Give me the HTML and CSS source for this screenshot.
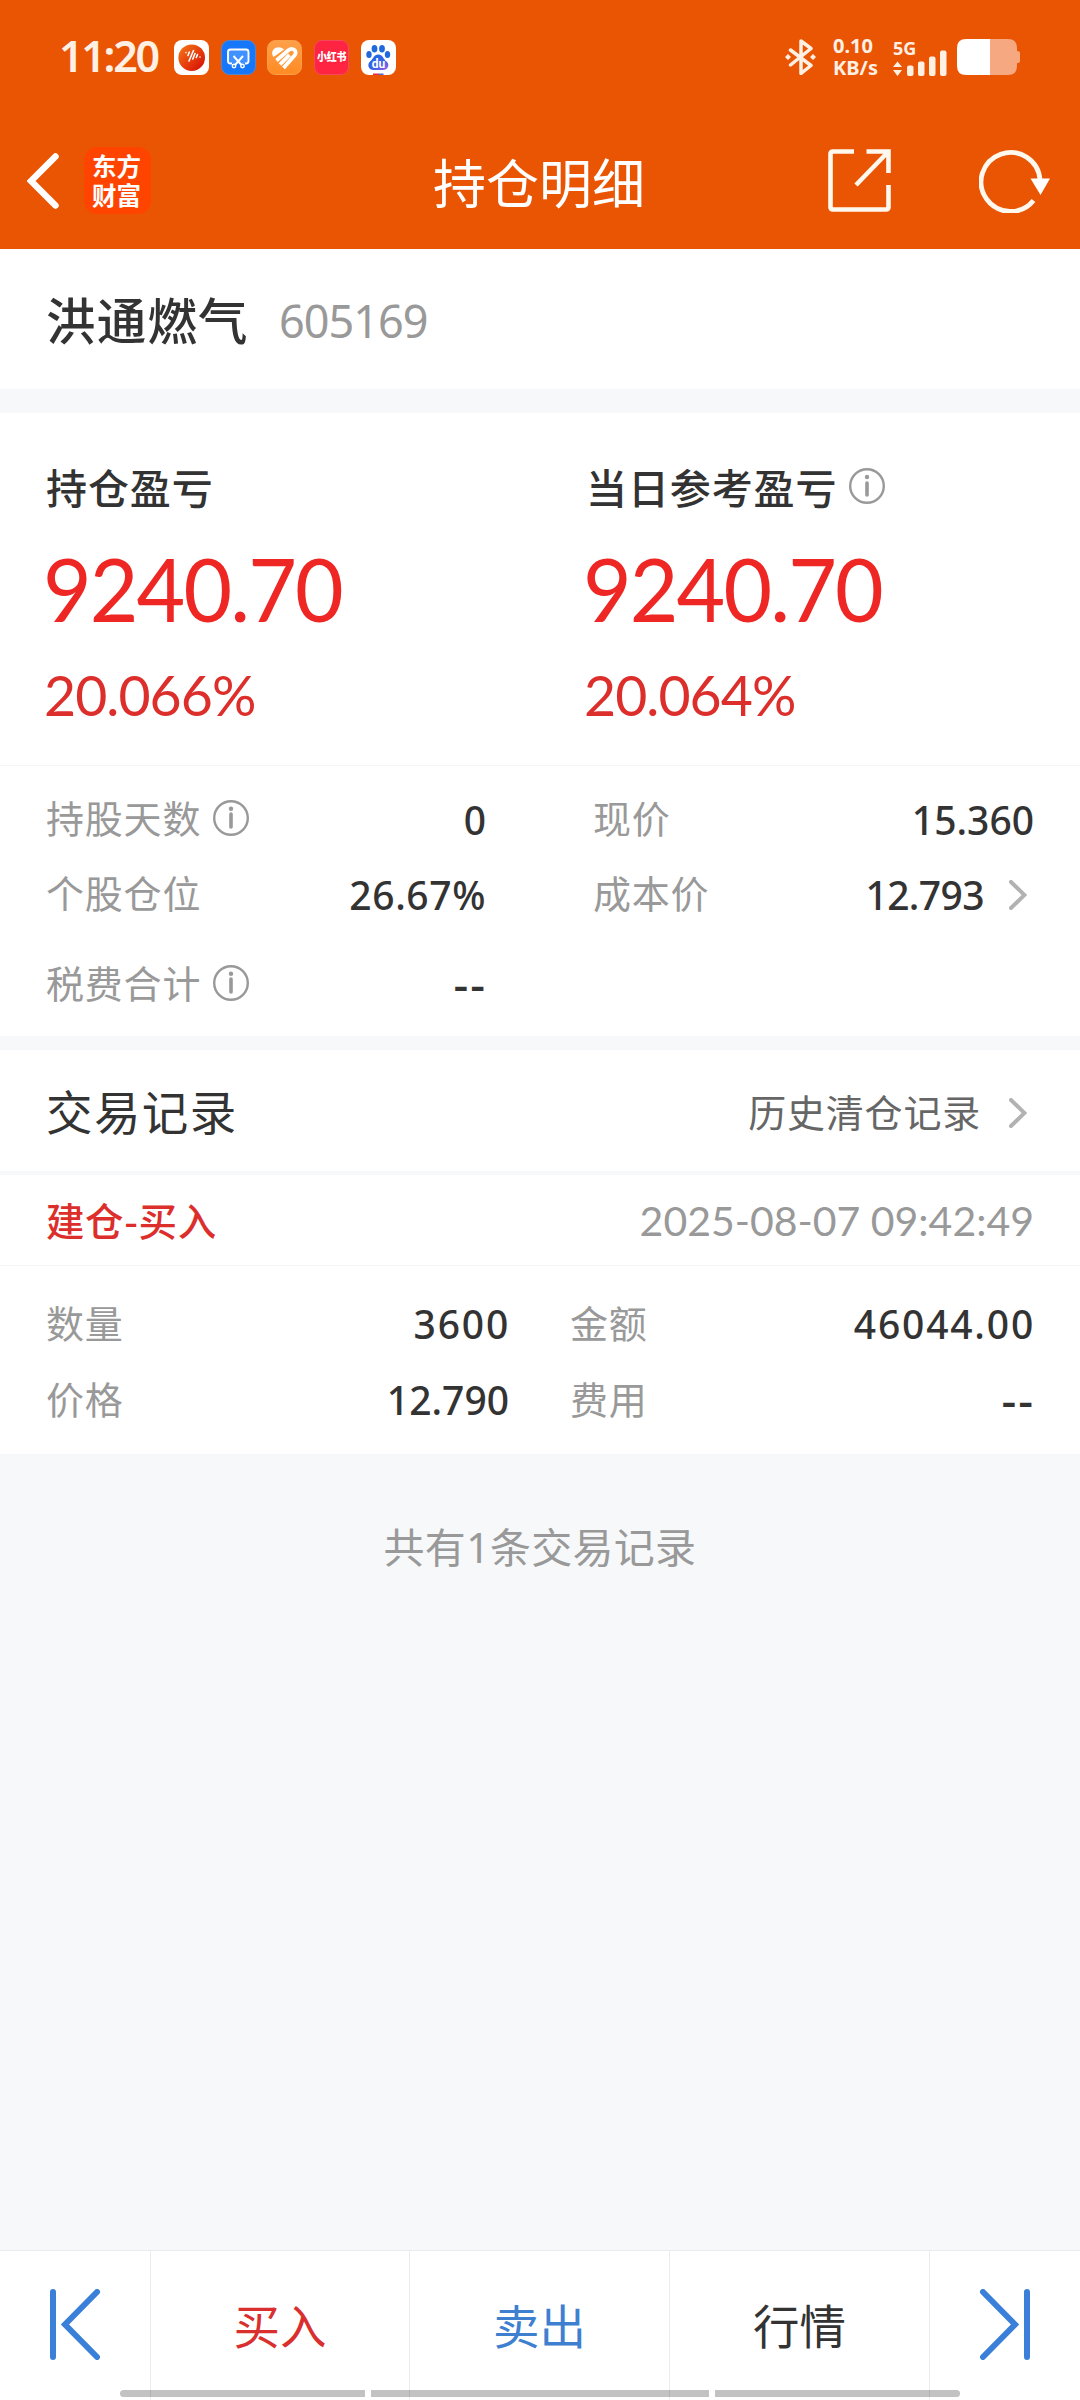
FILE: index.html
```html
<!DOCTYPE html>
<html lang="zh-CN">
<head>
<meta charset="utf-8">
<title>持仓明细</title>
<link rel="stylesheet" href="styles.css">
</head>
<body>
<div class="screen">
  <header class="header">
    <div class="status">
      <span class="clock">11:20</span>
      <div class="apps">
        <svg class="app" viewBox="0 0 35 35"><defs><linearGradient id="sun" x1="0" y1="0" x2="1" y2="1"><stop offset="0" stop-color="#f47a16"/><stop offset=".55" stop-color="#e63a0c"/><stop offset="1" stop-color="#d00808"/></linearGradient></defs><rect width="35" height="35" rx="8" fill="#fff"/><circle cx="17.7" cy="17.7" r="13.3" fill="url(#sun)"/><path d="M12 12.500v.1M15.300 12l-1.300 3.500M19.500 10.500l-4.500 10.500M21 13.500l-2.200 5.500M23.500 14.500l-1.200 3M26 17v.1" stroke="#fff" stroke-width="1.600" stroke-linecap="round"/></svg>
        <svg class="app" viewBox="0 0 35 35"><rect x=".5" y=".5" width="34" height="34" rx="8" fill="#1677fb" stroke="#5a86c8"/><path d="M11 23.500H9.500Q7 23.500 7 21V12Q7 9.500 9.500 9.500H25Q27.500 9.500 27.500 12V21Q27.500 23.500 25 23.500H24" fill="#3f92ff" stroke="#fff" stroke-width="1.900"/><path d="M12.500 16l8 9M22 16l-8 9" stroke="#fff" stroke-width="1.900"/><circle cx="13" cy="26" r="1.700" fill="#1677fb" stroke="#fff" stroke-width="1.500"/><circle cx="21.500" cy="26" r="1.700" fill="#1677fb" stroke="#fff" stroke-width="1.500"/></svg>
        <svg class="app" viewBox="0 0 35 35"><defs><linearGradient id="heart" x1="0" y1="0" x2="0" y2="1"><stop offset="0" stop-color="#ffa04a"/><stop offset="1" stop-color="#ff8b23"/></linearGradient></defs><rect x=".5" y=".5" width="34" height="34" rx="8" fill="url(#heart)" stroke="#f9a04b"/><path d="M6.500 17C3 12 7 7 12 7.300C14 7.400 15.500 8.200 17 9.500Z" fill="#fff"/><g fill="none" stroke="#fff" stroke-width="3.800"><path d="M9.500 20.500L21 10.500C26 6.500 31 11.500 27.500 15.500L16.500 28"/><path d="M13 24.500L22.500 14.800"/></g></svg>
        <span class="app app-red"><span>小红书</span></span>
        <svg class="app" viewBox="0 0 35 35"><defs><linearGradient id="paw" x1="0" y1="0" x2="1" y2="1"><stop offset="0" stop-color="#1b6ae6"/><stop offset=".6" stop-color="#3a62e8"/><stop offset="1" stop-color="#a35ce8"/></linearGradient></defs><rect width="35" height="35" rx="8" fill="#fff"/><g fill="#2068de"><ellipse cx="13.500" cy="8.700" rx="2.900" ry="3.800"/><ellipse cx="21" cy="8.700" rx="2.900" ry="3.800"/><ellipse cx="8" cy="14.500" rx="2.700" ry="3.500"/><ellipse cx="26.500" cy="14.500" rx="2.700" ry="3.500"/></g><path d="M17.300 14.500C22 14.500 22 19 25.500 21.500C29.500 25 26.500 30 22 30H12.500C8 30 5.500 25 9 21.500C12.500 19 12.500 14.500 17.300 14.500Z" fill="url(#paw)"/><text x="17.400" y="27.500" class="du">du</text><path d="M12 33.500h6v1.500h-6z" fill="#e0303a"/><path d="M18 33.500h4.500v1.500H18z" fill="#4a6ae0"/></svg>
      </div>
      <div class="signals">
        <svg class="bt" viewBox="0 0 31 36"><path d="M5.500 11L26 26.500L16 34.500V2L26 9.500L5.500 26" fill="none" stroke="#fff0e4" stroke-width="3.500" stroke-linejoin="round" stroke-linecap="round"/><path d="M0 18l3-3 3 3-3 3zM25 18l3-3 3 3-3 3z" fill="#fff0e4"/></svg>
        <div class="speed"><span>0.10</span><span>KB/s</span></div>
        <div class="cell"><span class="gen">5G</span>
          <svg class="bars" viewBox="0 0 54 26"><path d="M4.500 11.500L9 17H0zM4.500 26L0 20H9z" fill="#fff0e4"/><g fill="#fff0e4"><rect x="14" y="15.500" width="6.500" height="10.500" rx="2"/><rect x="25" y="11.500" width="6.500" height="14.500" rx="2"/><rect x="36" y="6.500" width="6.500" height="19.500" rx="2"/><rect x="47" y="0.500" width="6.500" height="25.500" rx="2"/></g></svg>
        </div>
        <svg class="battery" viewBox="0 0 63 36"><path d="M33 0H51Q60 0 60 9V12Q63 12 63 14V22Q63 24 60 24V27Q60 36 51 36H33Z" fill="#f6a980"/><path d="M33 0H9Q0 0 0 9V27Q0 36 9 36H33Z" fill="#fff"/></svg>
      </div>
    </div>
    <div class="navbar">
      <div class="nav-left">
        <svg class="back" viewBox="0 0 32 56"><path d="M28.500 3.500L4 28L28.500 52.500" fill="none" stroke="#fff" stroke-width="6.500" stroke-linecap="round"/></svg>
        <div class="logo"><span>东方</span><span>财富</span></div>
      </div>
      <h1 class="title">持仓明细</h1>
      <div class="nav-right">
        <svg class="share" viewBox="0 0 63 63"><path d="M26 2.500H5Q2.500 2.500 2.500 5V58Q2.500 60.500 5 60.500H58Q60.500 60.500 60.500 58V36M60.500 24V2.500H38.500M28 36L59 4" fill="none" stroke="#fff8ee" stroke-width="4.600"/></svg>
        <svg class="reload" viewBox="0 0 72 64"><path d="M54.500 51.500A29.500 29.500 0 1 1 61 31" fill="none" stroke="#fff8ee" stroke-width="4.800"/><path d="M51.500 29.500H71L61.500 46Z" fill="#fff"/></svg>
      </div>
    </div>
  </header>

  <section class="stock"><span class="stock-name">洪通燃气</span><span class="stock-code">605169</span></section>

  <section class="pnl">
    <div class="pnl-col"><div class="pnl-label"><span>持仓盈亏</span></div><div class="pnl-value">9240.70</div><div class="pnl-pct">20.066%</div></div>
    <div class="pnl-col"><div class="pnl-label"><span>当日参考盈亏</span><svg class="info" viewBox="0 0 36 36"><circle cx="18" cy="18" r="16.800"/><path d="M18 15V27"/><path class="dot" d="M18 9v.1"/></svg></div><div class="pnl-value">9240.70</div><div class="pnl-pct">20.064%</div></div>
  </section>

  <section class="details">
    <div class="drow"><div class="cell-l"><span class="lab">持股天数</span><svg class="info" viewBox="0 0 36 36"><circle cx="18" cy="18" r="16.800"/><path d="M18 14V27"/><path class="dot" d="M18 8.700v.1"/></svg><span class="val">0</span></div><div class="cell-r"><span class="lab">现价</span><span class="val">15.360</span></div></div>
    <div class="drow"><div class="cell-l"><span class="lab">个股仓位</span><span class="val pct">26.67%</span></div><div class="cell-r"><span class="lab">成本价</span><span class="val cost">12.793</span><svg class="chev" viewBox="0 0 18 30"><path d="M2 2L15.500 15L2 28"/></svg></div></div>
    <div class="drow tall"><div class="cell-l"><span class="lab">税费合计</span><svg class="info" viewBox="0 0 36 36"><circle cx="18" cy="18" r="16.800"/><path d="M18 14V27"/><path class="dot" d="M18 8.700v.1"/></svg><span class="val dash">--</span></div></div>
  </section>

  <section class="records">
    <div class="rec-head"><h2 class="rec-title">交易记录</h2><span class="history">历史清仓记录</span><svg class="chev" viewBox="0 0 18 30"><path d="M2 2L15.500 15L2 28"/></svg></div>
    <div class="rec-type"><span class="buy-tag">建仓-买入</span><time class="time">2025-08-07 09:42:49</time></div>
    <div class="rec-body">
      <div class="rrow"><div class="rl"><span class="lab">数量</span><span class="val wide">3600</span></div><div class="rr"><span class="lab">金额</span><span class="val wide">46044.00</span></div></div>
      <div class="rrow"><div class="rl"><span class="lab">价格</span><span class="val">12.790</span></div><div class="rr"><span class="lab">费用</span><span class="val dash">--</span></div></div>
    </div>
  </section>

  <p class="count">共有1条交易记录</p>

  <footer class="footer">
    <div class="step"><svg class="end" viewBox="0 0 52 71"><path d="M4 3V68M48 3L16 35.500L48 68"/></svg></div>
    <div class="tab buy">买入</div>
    <div class="tab sell">卖出</div>
    <div class="tab">行情</div>
    <div class="step"><svg class="end" viewBox="0 0 52 71"><path d="M48 3V68M4 3L36 35.500L4 68"/></svg></div>
    <div class="gesture"><i class="side"></i><i class="mid"></i><i class="side last"></i></div>
  </footer>
</div>
</body>
</html>
```
FILE: styles.css
```css
* { box-sizing: border-box; }
body { margin: 0; background: #f6f8fa; font-family: "Noto Sans CJK SC", sans-serif; color: #333; }
svg { display: block; flex: none; }
h1, h2, p { margin: 0; font-weight: 400; }
.screen { width: 1080px; height: 2400px; display: flex; flex-direction: column; overflow: hidden; background: #f6f8fa; }

/* header */
.header { height: 249px; background: #ea5504; color: #fff; flex: none; }
.status { height: 114px; display: flex; align-items: center; padding: 0 60px 0 59px; }
.clock { font: 600 43px/50px "Noto Sans", sans-serif; color: #fff0e4; letter-spacing: -2.3px; width: 115px; padding-bottom: 2px; }
.apps { display: flex; gap: 11.7px; }
.app { width: 35px; height: 35px; }
.app-red { border-radius: 8px; background: #ff2442; display: flex; align-items: center; justify-content: center; border: 1px solid #f6485c; font: 900 10px/12px "Noto Sans CJK SC", sans-serif; white-space: nowrap; letter-spacing: -.3px; }
.app-red span { transform: scaleY(1.12); }
.du { font: 700 12px Roboto, sans-serif; fill: #fff; text-anchor: middle; }
.signals { margin-left: auto; display: flex; align-items: center; }
.bt { width: 31px; height: 36px; margin-right: 17px; }
.speed { width: 60px; display: flex; flex-direction: column; font: 700 20px/22px "Noto Sans", sans-serif; color: #fff0e4; }
.cell { width: 64px; height: 38px; position: relative; }
.gen { display: block; font: 700 18px/20px "Noto Sans", sans-serif; color: #fff0e4; }
.bars { position: absolute; left: 0; bottom: 0; width: 54px; height: 26px; }
.battery { width: 63px; height: 36px; }
.navbar { height: 135px; display: grid; grid-template-columns: 1fr auto 1fr; align-items: center; padding: 0 29px 2px 27px; }
.nav-left { display: flex; align-items: center; gap: 25px; }
.back { width: 32px; height: 56px; }
.logo { width: 67px; height: 67px; border-radius: 13px; background: #ff4400; display: flex; flex-direction: column; align-items: center; justify-content: center; font: 700 24.5px/29px "Noto Sans CJK SC", sans-serif; padding: 0 2px 2px 0; }
.title { font-size: 53px; line-height: 70px; }
.nav-right { display: flex; align-items: center; justify-content: flex-end; gap: 88px; }
.share { width: 63px; height: 63px; }
.reload { width: 72px; height: 64px; }

/* stock */
.stock { height: 140px; background: #fff; display: flex; align-items: center; padding-left: 46px; flex: none; margin-bottom: 24px; }
.stock-name { font-size: 49.5px; letter-spacing: 1.2px; font-weight: 500; line-height: 60px; width: 233px; }
.stock-code { font: 400 45px/60px "Noto Sans", sans-serif; color: #999; letter-spacing: -1px; padding-top: 3px; }

/* profit */
.pnl { height: 353px; background: #fff; border-bottom: 1px solid #f3f5f6; display: grid; grid-template-columns: 1fr 1fr; flex: none; padding-top: 44px; }
.pnl-col { padding-left: 46px; }
.pnl-label { display: flex; align-items: center; height: 60px; font-size: 41px; letter-spacing: .9px; line-height: 60px; padding-bottom: 2px; font-weight: 500; }
.pnl-label .info { margin: 0 0 1px 12px; }
.pnl-value { font: 400 87px/100px Lato, sans-serif; color: #ee2724; margin: 22px 0 0 -3px; letter-spacing: -2px; transform: scaleX(.966); transform-origin: left; }
.pnl-pct { font: 400 57px/70px Lato, sans-serif; color: #dc2f2c; margin: 20px 0 0 -2px; letter-spacing: -1px; transform: scaleX(.972); transform-origin: left; }
.info { width: 36px; height: 36px; margin-bottom: 3px; fill: none; stroke: #999; stroke-width: 2.4; }
.info path { stroke-width: 3.6; stroke-linecap: round; }
.info .dot { stroke-width: 4.4; }

/* details */
.details { height: 270px; background: #fff; padding-top: 16px; flex: none; margin-bottom: 14px; }
.drow { display: grid; grid-template-columns: 486px 1fr; height: 75px; }
.drow.tall { height: 104px; }
.cell-l, .cell-r, .rl, .rr { display: flex; align-items: center; }
.cell-l { padding-left: 46px; }
.cell-r { padding: 0 46px 0 107px; }
.lab { font-size: 38px; letter-spacing: .8px; line-height: 56px; padding-bottom: 5px; color: #999; }
.lab + .info { margin-left: 12px; }
.val { font: 500 39px/56px "Noto Sans", sans-serif; margin-left: auto; color: #333; }
.val.wide { letter-spacing: 1.8px; margin-right: -1px; }
.val.pct { letter-spacing: .6px; margin-right: 0; }
.val.cost { letter-spacing: -.6px; }
.val.dash { font-size: 46px; letter-spacing: 2px; margin-right: -1px; padding-bottom: 3px; }
.chev { width: 18px; height: 30px; margin-left: 25px; fill: none; stroke: #b2b2b2; stroke-width: 4; stroke-linecap: round; margin-right: 7px; }

/* records */
.records { background: #fff; height: 404px; flex: none; }
.rec-head { height: 125px; border-bottom: 4px solid #f6f8f9; display: flex; align-items: center; padding: 0 46px; }
.rec-head .chev { margin-top: 5px; }
.rec-title { font-size: 46.5px; letter-spacing: 1.4px; line-height: 60px; padding-bottom: 1px; }
.history { margin: 0 3px 0 auto; font-size: 38px; letter-spacing: .8px; line-height: 56px; color: #666; }
.rec-type { height: 91px; border-bottom: 1px solid #f5f7f7; display: flex; align-items: center; justify-content: space-between; padding: 0 46px; }
.buy-tag { font-size: 38.5px; letter-spacing: .6px; line-height: 56px; padding-bottom: 3px; font-weight: 500; color: #dc2f2c; }
.time { font: 400 41px/56px Lato, sans-serif; padding-top: 2px; color: #999; }
.rec-body { padding-top: 20px; }
.rrow { display: grid; grid-template-columns: 509px 1fr; height: 76px; }
.rl { padding-left: 46px; }
.rr { padding: 0 46px 0 61px; }

.count { margin-top: 63px; text-align: center; font: 400 41px/60px "Noto Sans", "Noto Sans CJK SC", sans-serif; letter-spacing: .3px; color: #999; }

/* footer */
.footer { margin-top: auto; height: 150px; background: #fff; border-top: 1px solid #e9ebee; display: grid; grid-template-columns: 151px 259px 260px 260px 150px; position: relative; flex: none; }
.step, .tab { display: flex; align-items: center; justify-content: center; padding-bottom: 3px; }
.tab { border-right: 1px solid #ececef; font-size: 46.5px; line-height: 60px; }
.step:first-child { border-right: 1px solid #ececef; }
.buy { color: #d9302f; }
.sell { color: #3f7fd0; }
.end { width: 52px; height: 71px; fill: none; stroke: #3a80d8; stroke-width: 6; stroke-linecap: round; }
.gesture { position: absolute; left: 120px; bottom: 3px; width: 840px; height: 7px; display: flex; gap: 6px; }
.gesture i { background: rgba(0, 0, 0, .24); border-radius: 4px 0 0 4px; width: 245px; }
.gesture .mid { width: 338px; border-radius: 0; }
.gesture .last { border-radius: 0 4px 4px 0; }
```
